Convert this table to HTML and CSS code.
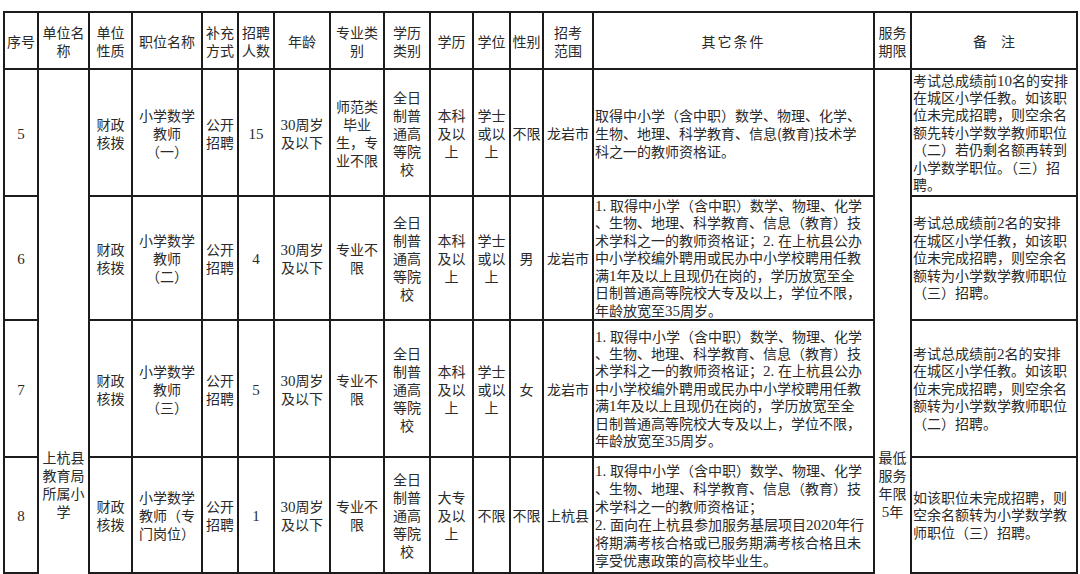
FILE: index.html
```html
<!DOCTYPE html>
<html lang="zh-CN">
<head>
<meta charset="utf-8">
<title>招聘职位表</title>
<link rel="stylesheet" href="styles.css">
</head>
<body>
<div class="sheet">
  <div class="c"><p>序号</p></div>
  <div class="c"><p>单位名<br>称</p></div>
  <div class="c"><p>单位<br>性质</p></div>
  <div class="c"><p>职位名称</p></div>
  <div class="c"><p>补充<br>方式</p></div>
  <div class="c"><p>招聘<br>人数</p></div>
  <div class="c"><p>年龄</p></div>
  <div class="c"><p>专业类<br>别</p></div>
  <div class="c"><p>学历<br>类别</p></div>
  <div class="c"><p>学历</p></div>
  <div class="c"><p>学位</p></div>
  <div class="c"><p>性别</p></div>
  <div class="c"><p>招考<br>范围</p></div>
  <div class="c"><p class="wide">其它条件</p></div>
  <div class="c"><p>服务<br>期限</p></div>
  <div class="c"><p>备　注</p></div>

  <div class="c unit"><p>上杭县<br>教育局<br>所属小<br>学</p></div>
  <div class="c term"><p>最低<br>服务<br>年限<br><span class="n">5</span>年</p></div>

  <!-- row 5 -->
  <div class="c"><p><span class="n">5</span></p></div>
  <div class="c"><p>财政<br>核拨</p></div>
  <div class="c"><p>小学数学<br>教师<br>（一）</p></div>
  <div class="c"><p>公开<br>招聘</p></div>
  <div class="c"><p><span class="n">15</span></p></div>
  <div class="c"><p><span class="n">30</span>周岁<br>及以下</p></div>
  <div class="c"><p>师范类<br>毕业<br>生，专<br>业不限</p></div>
  <div class="c"><p>全日<br>制普<br>通高<br>等院<br>校</p></div>
  <div class="c"><p>本科<br>及以<br>上</p></div>
  <div class="c"><p>学士<br>或以<br>上</p></div>
  <div class="c"><p>不限</p></div>
  <div class="c"><p>龙岩市</p></div>
  <div class="c txt"><p>取得中小学（含中职）数学、物理、化学、<br>生物、地理、科学教育、信息(教育)技术学<br>科之一的教师资格证。</p></div>
  <div class="c txt note"><p>考试总成绩前<span class="n">10</span>名的安排<br>在城区小学任教。如该职<br>位未完成招聘，则空余名<br>额先转小学数学教师职位<br>（二）若仍剩名额再转到<br>小学数学职位。（三）招<br>聘。</p></div>

  <!-- row 6 -->
  <div class="c"><p><span class="n">6</span></p></div>
  <div class="c"><p>财政<br>核拨</p></div>
  <div class="c"><p>小学数学<br>教师<br>（二）</p></div>
  <div class="c"><p>公开<br>招聘</p></div>
  <div class="c"><p><span class="n">4</span></p></div>
  <div class="c"><p><span class="n">30</span>周岁<br>及以下</p></div>
  <div class="c"><p>专业不<br>限</p></div>
  <div class="c"><p>全日<br>制普<br>通高<br>等院<br>校</p></div>
  <div class="c"><p>本科<br>及以<br>上</p></div>
  <div class="c"><p>学士<br>或以<br>上</p></div>
  <div class="c"><p>男</p></div>
  <div class="c"><p>龙岩市</p></div>
  <div class="c txt tight"><p><span class="n">1. </span>取得中小学（含中职）数学、物理、化学<br>、生物、地理、科学教育、信息（教育）技<br>术学科之一的教师资格证；<span class="n">2. </span>在上杭县公办<br>中小学校编外聘用或民办中小学校聘用任教<br>满<span class="n">1</span>年及以上且现仍在岗的，学历放宽至全<br>日制普通高等院校大专及以上，学位不限，<br>年龄放宽至<span class="n">35</span>周岁。</p></div>
  <div class="c txt note"><p>考试总成绩前<span class="n">2</span>名的安排<br>在城区小学任教，如该职<br>位未完成招聘，则空余名<br>额转为小学数学教师职位<br>（三）招聘。</p></div>

  <!-- row 7 -->
  <div class="c"><p><span class="n">7</span></p></div>
  <div class="c"><p>财政<br>核拨</p></div>
  <div class="c"><p>小学数学<br>教师<br>（三）</p></div>
  <div class="c"><p>公开<br>招聘</p></div>
  <div class="c"><p><span class="n">5</span></p></div>
  <div class="c"><p><span class="n">30</span>周岁<br>及以下</p></div>
  <div class="c"><p>专业不<br>限</p></div>
  <div class="c"><p>全日<br>制普<br>通高<br>等院<br>校</p></div>
  <div class="c"><p>本科<br>及以<br>上</p></div>
  <div class="c"><p>学士<br>或以<br>上</p></div>
  <div class="c"><p>女</p></div>
  <div class="c"><p>龙岩市</p></div>
  <div class="c txt tight"><p><span class="n">1. </span>取得中小学（含中职）数学、物理、化学<br>、生物、地理、科学教育、信息（教育）技<br>术学科之一的教师资格证；<span class="n">2. </span>在上杭县公办<br>中小学校编外聘用或民办中小学校聘用任教<br>满<span class="n">1</span>年及以上且现仍在岗的，学历放宽至全<br>日制普通高等院校大专及以上，学位不限，<br>年龄放宽至<span class="n">35</span>周岁。</p></div>
  <div class="c txt note"><p>考试总成绩前<span class="n">2</span>名的安排<br>在城区小学任教。如该职<br>位未完成招聘，则空余名<br>额转为小学数学教师职位<br>（二）招聘。</p></div>

  <!-- row 8 -->
  <div class="c"><p><span class="n">8</span></p></div>
  <div class="c"><p>财政<br>核拨</p></div>
  <div class="c"><p>小学数学<br>教师（专<br>门岗位）</p></div>
  <div class="c"><p>公开<br>招聘</p></div>
  <div class="c"><p><span class="n">1</span></p></div>
  <div class="c"><p><span class="n">30</span>周岁<br>及以下</p></div>
  <div class="c"><p>专业不<br>限</p></div>
  <div class="c"><p>全日<br>制普<br>通高<br>等院<br>校</p></div>
  <div class="c"><p>大专<br>及以<br>上</p></div>
  <div class="c"><p>不限</p></div>
  <div class="c"><p>不限</p></div>
  <div class="c"><p>上杭县</p></div>
  <div class="c txt"><p><span class="n">1. </span>取得中小学（含中职）数学、物理、化学<br>、生物、地理、科学教育、信息（教育）技<br>术学科之一的教师资格证；<br><span class="n">2. </span>面向在上杭县参加服务基层项目<span class="n">2020</span>年行<br>将期满考核合格或已服务期满考核合格且未<br>享受优惠政策的高校毕业生。</p></div>
  <div class="c txt note"><p>如该职位未完成招聘，则<br>空余名额转为小学数学教<br>师职位（三）招聘。</p></div>

  <!-- continuation row (below the visible area) -->
  <div class="c"></div>
  <div class="c"></div>
  <div class="c"></div>
  <div class="c"></div>
  <div class="c"></div>
  <div class="c"></div>
  <div class="c"></div>
  <div class="c"></div>
  <div class="c"></div>
  <div class="c"></div>
  <div class="c"></div>
  <div class="c"></div>
  <div class="c"></div>
  <div class="c"></div>
</div>
</body>
</html>
```

FILE: styles.css
```css
html, body {
  margin: 0;
  padding: 0;
  background: #ffffff;
  overflow: hidden;
  height: 574px;
}

.sheet {
  box-sizing: border-box;
  width: 1075px;
  margin: 11px 0 0 3px;
  padding: 2px;
  display: grid;
  gap: 2px;
  background: #1c1c1c;
  grid-template-columns: 32px 49px 41px 68px 34px 34px 54px 52px 44px 41px 35px 31px 48px 279px 35px 164px;
  grid-template-rows: 55px 125px 122px 135px 114px 324px;
  font-family: "Noto Sans CJK SC", "Liberation Serif", sans-serif;
  font-size: 14px;
  line-height: 18px;
  color: #2a2a2a;
}

.c {
  background: #ffffff;
  display: flex;
  align-items: center;
  justify-content: center;
  text-align: center;
  white-space: nowrap;
  overflow: hidden;
}

.c p {
  margin: 0;
}

.wide {
  letter-spacing: 2px;
}

.n {
  font-family: "Liberation Serif", serif;
  font-size: 15px;
  line-height: 12px;
}

.unit {
  grid-column: 2;
  grid-row: 2 / 7;
}

.term {
  grid-column: 15;
  grid-row: 2 / 7;
}

.txt {
  justify-content: flex-start;
  text-align: left;
  padding-left: 1px;
}

.tight {
  line-height: 17.4px;
}

.note {
  line-height: 17.4px;
}
```
